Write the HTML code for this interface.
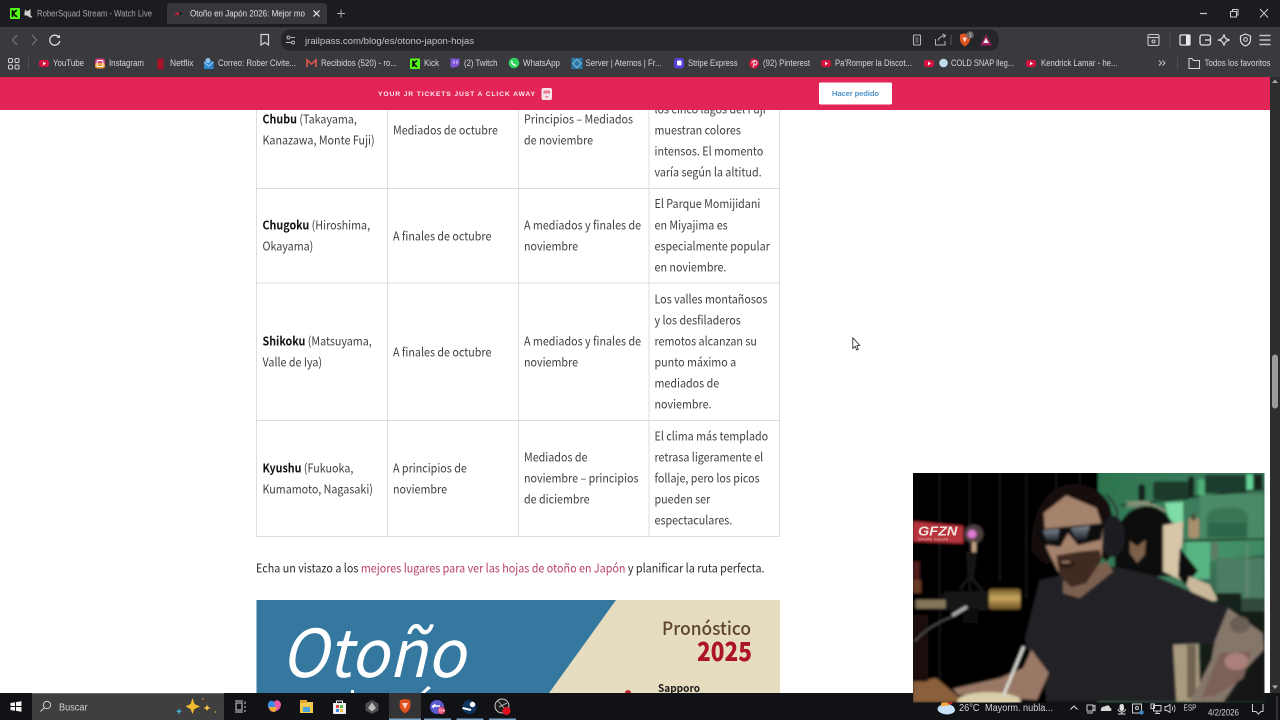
<!DOCTYPE html>
<html lang="es"><head><meta charset="utf-8"><title>Otoño en Japón</title>
<style>
html,body{margin:0;padding:0;width:1280px;height:720px;overflow:hidden;background:#fff}
svg{display:block;position:absolute;left:0;top:0}
.c{font-family:"Noto Sans CJK JP","Liberation Sans",sans-serif;font-size:12.2px;fill:#414141}
.b{font-weight:700;fill:#111}
.u{font-family:"Liberation Sans",sans-serif;font-size:8.8px;fill:#d8d8d8}
.t{font-family:"Liberation Sans",sans-serif;font-size:9px;fill:#e2e2e2}
.ic{fill:none;stroke:#c8c8c8;stroke-width:1.1}
</style></head><body>
<svg width="1280" height="720" viewBox="0 0 1280 720" xmlns="http://www.w3.org/2000/svg">
<defs>
<filter id="bl" x="-5%" y="-5%" width="110%" height="110%"><feGaussianBlur stdDeviation="4"/></filter>
<linearGradient id="gold" x1="0" y1="0" x2="0" y2="1"><stop offset="0" stop-color="#6e5526"/><stop offset=".45" stop-color="#c9a860"/><stop offset="1" stop-color="#6a5024"/></linearGradient>
<linearGradient id="wall" x1="0" y1="0" x2="1" y2="1"><stop offset="0" stop-color="#2b744e"/><stop offset=".45" stop-color="#3f7f5e"/><stop offset="1" stop-color="#1e3129"/></linearGradient>
<linearGradient id="lens" x1="0" y1="0" x2="0" y2="1"><stop offset="0" stop-color="#7d8792"/><stop offset="1" stop-color="#23252a"/></linearGradient>
</defs>

<!-- page -->
<rect width="1280" height="720" fill="#fff"/>
<g stroke="#dedede" stroke-width="1" fill="none">
<path d="M256.500 100V536.500H779.500V100M387.500 100V536.500M518.500 100V536.500M649 100V536.500M256.500 188.500H779.500M256.500 283H779.500M256.500 420.500H779.500"/>
</g>
<g transform="translate(262.500,.7) scale(.88,1)">
<text class="c" x="0" y="123"><tspan class="b">Chubu</tspan> (Takayama,</text>
<text class="c" x="0" y="144">Kanazawa, Monte Fuji)</text>
<text class="c" x="0" y="229"><tspan class="b">Chugoku</tspan> (Hiroshima,</text>
<text class="c" x="0" y="250">Okayama)</text>
<text class="c" x="0" y="345"><tspan class="b">Shikoku</tspan> (Matsuyama,</text>
<text class="c" x="0" y="366">Valle de Iya)</text>
<text class="c" x="0" y="472"><tspan class="b">Kyushu</tspan> (Fukuoka,</text>
<text class="c" x="0" y="493">Kumamoto, Nagasaki)</text>
</g>
<g transform="translate(393,.7) scale(.88,1)">
<text class="c" x="0" y="134">Mediados de octubre</text>
<text class="c" x="0" y="240">A finales de octubre</text>
<text class="c" x="0" y="356">A finales de octubre</text>
<text class="c" x="0" y="472">A principios de</text>
<text class="c" x="0" y="493">noviembre</text>
</g>
<g transform="translate(524,.7) scale(.88,1)">
<text class="c" x="0" y="123">Principios – Mediados</text>
<text class="c" x="0" y="144">de noviembre</text>
<text class="c" x="0" y="229">A mediados y finales de</text>
<text class="c" x="0" y="250">noviembre</text>
<text class="c" x="0" y="345">A mediados y finales de</text>
<text class="c" x="0" y="366">noviembre</text>
<text class="c" x="0" y="461">Mediados de</text>
<text class="c" x="0" y="482">noviembre – principios</text>
<text class="c" x="0" y="503">de diciembre</text>
</g>
<g transform="translate(654.500,.7) scale(.88,1)">
<text class="c" x="0" y="113">los cinco lagos del Fuji</text>
<text class="c" x="0" y="134">muestran colores</text>
<text class="c" x="0" y="155">intensos. El momento</text>
<text class="c" x="0" y="176">varía según la altitud.</text>
<text class="c" x="0" y="207.500">El Parque Momijidani</text>
<text class="c" x="0" y="229">en Miyajima es</text>
<text class="c" x="0" y="250">especialmente popular</text>
<text class="c" x="0" y="271">en noviembre.</text>
<text class="c" x="0" y="303">Los valles montañosos</text>
<text class="c" x="0" y="324">y los desfiladeros</text>
<text class="c" x="0" y="345">remotos alcanzan su</text>
<text class="c" x="0" y="366">punto máximo a</text>
<text class="c" x="0" y="387">mediados de</text>
<text class="c" x="0" y="408">noviembre.</text>
<text class="c" x="0" y="440">El clima más templado</text>
<text class="c" x="0" y="461">retrasa ligeramente el</text>
<text class="c" x="0" y="482">follaje, pero los picos</text>
<text class="c" x="0" y="503">pueden ser</text>
<text class="c" x="0" y="524">espectaculares.</text>
</g>
<g transform="translate(256,.7) scale(.882,1)">
<text class="c" x="0" y="572" style="fill:#2c2c2c">Echa un vistazo a los <tspan style="fill:#b8406e">mejores lugares para ver las hojas de otoño en Japón</tspan> y planificar la ruta perfecta.</text>
</g>

<!-- article image -->
<rect x="256.500" y="600" width="523.500" height="100" fill="#e6dcc0"/>
<polygon points="256.500,600 616,600 544,700 256.500,700" fill="#34779f"/>
<text x="281" y="677" font-family="'Noto Sans CJK JP','Liberation Sans',sans-serif" font-weight="400" font-style="italic" font-size="66" fill="#fff" textLength="184" lengthAdjust="spacingAndGlyphs">Otoño</text>
<polygon points="421,693 428,686 431,688 425,693" fill="#fff"/>
<rect x="351" y="690" width="3" height="4" fill="#fff"/>
<text x="662" y="635" font-family="'Noto Sans CJK JP',sans-serif" font-weight="500" font-size="18" fill="#5d4330" textLength="89" lengthAdjust="spacingAndGlyphs">Pronóstico</text>
<text x="697" y="661" font-family="'Noto Sans CJK JP',sans-serif" font-weight="900" font-size="26" fill="#ad1527" textLength="55" lengthAdjust="spacingAndGlyphs">2025</text>
<text x="658" y="692" font-family="'Noto Sans CJK JP',sans-serif" font-weight="700" font-size="10.500" fill="#1a1a1a" textLength="42" lengthAdjust="spacingAndGlyphs">Sapporo</text>
<circle cx="628" cy="693" r="3" fill="#c0242c"/>

<!-- banner -->
<rect x="0" y="77" width="1270" height="33" fill="#e32457"/>
<text x="378" y="96" font-family="'Liberation Sans',sans-serif" font-weight="700" font-size="6.800" fill="#fbe9ee" textLength="157">YOUR JR TICKETS JUST A CLICK AWAY</text>
<rect x="541.500" y="88" width="10.500" height="12" rx="2" fill="#f7e4e8"/>
<rect x="543.500" y="90.500" width="6.500" height="3" fill="#e8778f"/>
<rect x="545.500" y="96" width="2.500" height="1.500" fill="#e8778f"/>
<rect x="819" y="82.500" width="73" height="22" rx="1.500" fill="#fff"/>
<text x="832" y="96" font-family="'Liberation Sans',sans-serif" font-weight="700" font-size="7.600" fill="#4e93c9" textLength="47">Hacer pedido</text>

<!-- scrollbar -->
<rect x="1270" y="77" width="10" height="616" fill="#2d2d2d"/>
<polygon points="1275,79.500 1278,83 1272,83" fill="#aaa"/>
<polygon points="1275,689 1278,685.500 1272,685.500" fill="#aaa"/>
<rect x="1272" y="354.500" width="6" height="54" rx="3" fill="#9b9b9b"/>

<!-- cursor -->
<path d="M852.800 337.800V348.500L855.200 346.300L856.700 350L858.300 349.300L856.800 345.700L859.800 345.500Z" fill="#fff" stroke="#222" stroke-width=".8"/>

<!-- chrome -->
<rect width="1280" height="27" fill="#1c1c20"/>
<rect y="27" width="1280" height="50" fill="#3a3a3e"/>
<path d="M167 24V7Q167 3 171 3H323Q327 3 327 7V24Z" fill="#37373b"/>
<!-- tab 1 -->
<rect x="10" y="8" width="10" height="11" rx="1" fill="#53fc18"/>
<path d="M12.500 10V17M12.800 13.500L16.800 10M13 13.500L17 17" stroke="#0b0b0b" stroke-width="1.700" fill="none"/>
<g stroke="#cfcfcf" fill="none" stroke-width="1"><path d="M25 12H27L30 10V17L27 15H25Z" fill="#cfcfcf"/><path d="M25 10L32 17.500"/></g>
<text class="t" x="37" y="16.500" textLength="115" lengthAdjust="spacingAndGlyphs" style="fill:#a8a8a8">RoberSquad Stream - Watch Live</text>
<!-- tab 2 -->
<path d="M174 15L178 12H183L180 15Z" fill="#c4213f"/>
<rect x="179" y="12" width="3" height="3" fill="#222"/>
<text class="t" x="190" y="16.500" textLength="115" lengthAdjust="spacingAndGlyphs">Otoño en Japón 2026: Mejor mo</text>
<path d="M313.500 10.500L319.500 16.500M319.500 10.500L313.500 16.500" stroke="#eee" stroke-width="1.200"/>
<path d="M341 9.500V17.500M337 13.500H345" stroke="#aaa" stroke-width="1"/>
<!-- window ctl -->
<path d="M1200 13.500H1207" stroke="#ccc" stroke-width="1.200"/>
<path d="M1230.500 11.500H1236.500V17H1230.500ZM1232.500 11.500V9.500H1238V15H1236.500" stroke="#ccc" fill="none"/>
<path d="M1260 9L1268 17.500M1268 9L1260 17.500" stroke="#ccc" stroke-width="1"/>
<!-- nav -->
<path d="M17 35L12.500 40L17 45" stroke="#77777c" fill="none" stroke-width="1.100"/>
<path d="M32 35L36.500 40L32 45" stroke="#77777c" fill="none" stroke-width="1.100"/>
<path d="M59 37.500A5 5 0 1 0 59.700 41" stroke="#ddd" fill="none" stroke-width="1.300"/><path d="M56.500 37.800L60 38V34.800Z" fill="#ddd"/>
<path d="M261 34.500H268.500V45L264.800 42.500L261 45Z" stroke="#d4d4d4" fill="none" stroke-width="1.200"/>
<!-- address -->
<rect x="281" y="29.500" width="718" height="21" rx="9" fill="#26262a"/>
<g stroke="#bdbdbd" fill="none" stroke-width=".9"><circle cx="288.500" cy="37.500" r="1.500"/><circle cx="293" cy="42.500" r="1.500"/><path d="M291 37.500H295M286 42.500H291"/></g>
<text x="305" y="44" font-family="'Liberation Sans',sans-serif" font-size="9.400" fill="#c4c4c4" textLength="169" lengthAdjust="spacingAndGlyphs">jrailpass.com/blog/es/otono-japon-hojas</text>
<rect x="913.500" y="35" width="7" height="10" rx="1" fill="none" stroke="#b5b5b5" stroke-width="1.100"/><path d="M915.500 38H918.500M915.500 40H918.500M915.500 42H918.500" stroke="#b5b5b5" stroke-width=".7"/>
<path d="M935.500 39V45H945V41M938 40.500C939 37.500 941 36 945.500 35.500M942.500 34L945.500 35.500L943.500 38" stroke="#b5b5b5" fill="none" stroke-width="1"/>
<path d="M951 35V45" stroke="#555" stroke-width="1"/>
<path d="M960 34.500L964.500 33.500L969.500 34.500L970 40C969.500 43 966.500 45.500 964.800 46.500C963 45.500 960.500 43 960 40Z" fill="#e2521f"/>
<path d="M962.500 37.500L967 37.500L965.800 40.500L964.800 42L963.600 40.500Z" fill="#f6d4c6"/>
<circle cx="970" cy="35" r="3.800" fill="#666"/><text x="968.700" y="37.200" font-size="5.500" font-family="'Liberation Sans',sans-serif" fill="#ddd">1</text>
<polygon points="986,34.500 992,45.500 980,45.500" fill="#9b1f5a"/><polygon points="986,38 988.800,43 983.200,43" fill="#eee"/>
<!-- right tools -->
<g class="ic" stroke-width="1.200">
<rect x="1148" y="34.500" width="11" height="11" rx="1.500"/><path d="M1148 37.500H1159"/><circle cx="1153.500" cy="41.500" r="1.500"/>
</g>
<path d="M1170 33V47" stroke="#555"/>
<rect x="1180" y="35" width="10" height="10" rx="1" fill="none" stroke="#e8e8e8" stroke-width="1.200"/><rect x="1186" y="35" width="4" height="10" fill="#e8e8e8"/>
<rect x="1200" y="35" width="10.500" height="10" rx="2" fill="none" stroke="#ddd" stroke-width="1.300"/><path d="M1205 40H1210.500" stroke="#ddd" stroke-width="1.300"/>
<path d="M1224 34.500C1224.800 38 1225.500 39 1229.500 40C1226 40.800 1224.800 42 1224 45.500C1223 42 1222 40.800 1219 40C1222 39 1223 38 1224 34.500Z" fill="none" stroke="#ddd" stroke-width="1.200"/>
<path d="M1245.500 34L1250.500 36V40C1250.500 43 1248 45 1245.500 46C1243 45 1240.500 43 1240.500 40V36Z" fill="none" stroke="#ddd" stroke-width="1.200"/><circle cx="1245.500" cy="39.500" r="1.900" class="ic"/>
<path d="M1259.500 35.500H1270.500M1259.500 40H1270.500M1259.500 44.500H1270.500" stroke="#c4c4c4" stroke-width="1.400"/>

<!-- bookmarks -->
<g fill="none" stroke="#d5d5d5" stroke-width="1"><rect x="8.500" y="58.500" width="4" height="4" rx="1.300"/><rect x="15" y="58.500" width="4" height="4" rx="1.300"/><rect x="8.500" y="65" width="4" height="4" rx="1.300"/><rect x="15" y="65" width="4" height="4" rx="1.300"/></g>
<path d="M28.500 56V70" stroke="#4d4d4d"/>
<g id="yt"><rect x="39" y="60" width="10" height="7" rx="2.500" fill="#d6123f"/><polygon points="43,61.800 46,63.500 43,65.200" fill="#fff"/></g>
<text class="u" x="53" y="66" textLength="31" lengthAdjust="spacingAndGlyphs">YouTube</text>
<rect x="95" y="58.500" width="10" height="10" rx="2.500" fill="#d1417f"/><rect x="95" y="63" width="10" height="5.500" rx="2.500" fill="#f3a13a"/><rect x="97" y="60.500" width="6" height="6" rx="1.500" fill="none" stroke="#fff" stroke-width=".9"/>
<text class="u" x="109" y="66" textLength="35" lengthAdjust="spacingAndGlyphs">Instagram</text>
<rect x="157.500" y="58.500" width="6" height="11" fill="#a8122a"/>
<text class="u" x="170" y="66" textLength="23.500" lengthAdjust="spacingAndGlyphs">Netflix</text>
<rect x="204" y="61" width="9.500" height="8" rx="1" fill="#2b87cf"/><circle cx="208" cy="60.500" r="2.500" fill="#8fc3e8"/><path d="M204 62L208.500 66L213.500 62" stroke="#cfe6f7" fill="none" stroke-width=".7"/>
<text class="u" x="218" y="66" textLength="78" lengthAdjust="spacingAndGlyphs">Correo: Rober Civite...</text>
<path d="M307 67V60L311.500 64L316 60V67" fill="none" stroke="#d9574a" stroke-width="1.700"/>
<text class="u" x="321" y="66" textLength="76" lengthAdjust="spacingAndGlyphs">Recibidos (520) - ro...</text>
<rect x="410" y="58.500" width="10" height="10.500" rx="1" fill="#53fc18"/><path d="M413 60.500V67M413.200 63.700L417 60.500M413.300 63.700L417 67" stroke="#0b0b0b" stroke-width="1.600" fill="none"/>
<text class="u" x="424" y="66" textLength="15" lengthAdjust="spacingAndGlyphs">Kick</text>
<path d="M450.500 58.500H459.500V64.500L456.500 67H454L452.500 69V67H450.500Z" fill="#8056d8"/><path d="M454 60.800V63.800M457 60.800V63.800" stroke="#fff" stroke-width=".8"/>
<text class="u" x="464" y="66" textLength="33.500" lengthAdjust="spacingAndGlyphs">(2) Twitch</text>
<circle cx="514" cy="63" r="5.300" fill="#2fd15e"/><path d="M511.800 60.800C511.500 63.500 513.500 65.500 516.300 65.400" stroke="#fff" fill="none" stroke-width="1.400"/>
<text class="u" x="523" y="66" textLength="37" lengthAdjust="spacingAndGlyphs">WhatsApp</text>
<rect x="571.500" y="58" width="11" height="11" fill="#2a78a8"/><rect x="574" y="60.500" width="6" height="6" fill="none" stroke="#9ccbe5" stroke-width=".8" transform="rotate(45 577 63.500)"/>
<text class="u" x="585.500" y="66" textLength="76" lengthAdjust="spacingAndGlyphs">Server | Aternos | Fr...</text>
<rect x="674" y="58" width="10" height="10.500" rx="2.500" fill="#5b3fd6"/><rect x="677" y="60.500" width="4.500" height="5" rx="1" fill="#fff"/>
<text class="u" x="688" y="66" textLength="49.500" lengthAdjust="spacingAndGlyphs">Stripe Express</text>
<circle cx="754" cy="63.500" r="5" fill="#d6123f"/><path d="M753 67.500L754.500 61M752 63.500C751 60.500 757 59.500 757 62.500C757 65 754.500 65.500 753.800 64.500" stroke="#fff" stroke-width=".9" fill="none"/>
<text class="u" x="763" y="66" textLength="47" lengthAdjust="spacingAndGlyphs">(92) Pinterest</text>
<use href="#yt" x="782"/>
<text class="u" x="835" y="66" textLength="77" lengthAdjust="spacingAndGlyphs">Pa'Romper la Discot...</text>
<use href="#yt" x="885"/>
<circle cx="943.500" cy="63" r="4.300" fill="#bfdcec"/>
<text class="u" x="951" y="66" textLength="63" lengthAdjust="spacingAndGlyphs">COLD SNAP lleg...</text>
<use href="#yt" x="987"/>
<text class="u" x="1041" y="66" textLength="76.500" lengthAdjust="spacingAndGlyphs">Kendrick Lamar - he...</text>
<path d="M1159 60.500L1161.500 63L1159 65.500M1162.500 60.500L1165 63L1162.500 65.500" stroke="#ccc" fill="none" stroke-width=".9"/>
<path d="M1177.500 56V70" stroke="#4d4d4d"/>
<path d="M1189 60.500V68.500H1199.500V60.500H1193.500L1192 58.500H1189Z" stroke="#d5d5d5" fill="none"/>
<text class="u" x="1204.500" y="66" textLength="66" lengthAdjust="spacingAndGlyphs">Todos los favoritos</text>

<!-- taskbar -->
<rect y="693" width="1280" height="27" fill="#101216"/>
<rect x="32" y="693" width="192" height="27" fill="#3f3f40"/>
<rect x="32" y="693" width="192" height="1" fill="#6c6c6c"/>
<g fill="#f2f2f2"><path d="M10.500 703L15 702.300V706H10.500ZM16 702.100L21.500 701.200V706H16ZM10.500 707H15V710.800L10.500 710.100ZM16 707H21.500V711.800L16 710.900Z"/></g>
<circle cx="47" cy="705" r="3.700" fill="none" stroke="#ddd" stroke-width=".9"/><path d="M44.300 707.800L40.500 711.500" stroke="#ddd" stroke-width=".9"/>
<text x="59" y="710.500" font-family="'Liberation Sans',sans-serif" font-size="10" fill="#cfcfcf" textLength="28.500" lengthAdjust="spacingAndGlyphs">Buscar</text>
<path d="M192.500 698L194.500 704L200 706.500L194.500 709L192.500 714L190.500 709L185.500 706.500L190.500 704Z" fill="#f4b92e"/>
<path d="M207 704.500L208 707L210.500 708L208 709L207 711L206 709L203.500 708L206 707Z" fill="#f4c843"/>
<path d="M179 708.500L180 710.500L182 711.300L180 712L179 714.500L178 712L176 711.300L178 710.500Z" fill="#3fb6dc"/>
<circle cx="203" cy="699" r=".9" fill="#dd7a3a"/><circle cx="215.500" cy="712" r=".9" fill="#9ab83a"/>
<g stroke="#cfcfcf" fill="none" stroke-width="1"><rect x="236" y="703" width="6" height="7"/><path d="M235 701H243M235 712H243M245 701.500V704M245 706V708M245 710V712"/></g>
<path d="M268 704C269 700 273 700 274 702L277 708C278 711 275 712 273 711C270 710 267 708 268 704Z" fill="#3d8be8"/><path d="M274 702C276 699 280 700 281 704C281 708 278 711 276 711Z" fill="#e85aa8"/><path d="M269 707C269 711 272 712 275 712L277 707Z" fill="#f3a93a"/>
<rect x="300" y="702" width="13" height="11" fill="#f2c94c"/><rect x="300" y="700" width="7" height="3" fill="#e0a92e"/><rect x="303" y="707" width="7" height="5" fill="#4aa3dc"/>
<path d="M333 703H346V713Q346 714 345 714H334Q333 714 333 713Z" fill="#eee"/><path d="M336.500 703V701H342.500V703" stroke="#eee" fill="none"/><rect x="336" y="705" width="3" height="3" fill="#e24d3a"/><rect x="340" y="705" width="3" height="3" fill="#5aba4a"/><rect x="336" y="709" width="3" height="3" fill="#3a8ae2"/><rect x="340" y="709" width="3" height="3" fill="#f2c33a"/>
<polygon points="372,700 378.500,703.500 378.500,710.500 372,714 365.500,710.500 365.500,703.500" fill="#4c4c50"/><path d="M372 702.500L376 708L372 711.500L368 708Z" fill="#bdbdbd"/>
<rect x="389" y="693" width="32" height="27" fill="#343434"/>
<path d="M400 700L405 699L410 700L410.500 706C410 710 406.500 712.500 405 713.500C403.500 712.500 400 710 399.500 706Z" fill="#e2521f"/><path d="M402 703L408 703L406 707L405 709L404 707Z" fill="#f6d4c6"/>
<circle cx="437" cy="707" r="7" fill="#5a5ad0"/><path d="M432 706H440M435 704L433 708" stroke="#fff" stroke-width="1.500"/><circle cx="441.500" cy="710.500" r="3.800" fill="#e2456e"/><text x="438.800" y="712.500" font-size="5.500" font-family="'Liberation Sans',sans-serif" fill="#fff">9+</text>
<circle cx="469.500" cy="707" r="7" fill="#10355c"/><path d="M462.500 708L471 710" stroke="#fff" stroke-width="2"/><circle cx="472.500" cy="704.500" r="2.700" fill="#fff"/>
<circle cx="502" cy="706" r="7" fill="#1f1f1f" stroke="#ccc" stroke-width="1"/><path d="M498 701L504 708M507 703L499 707" stroke="#ccc" stroke-width=".7"/><circle cx="506.500" cy="711" r="4" fill="#e01020"/>
<rect x="389" y="718.500" width="32" height="1.500" fill="#7da7c9"/><rect x="424" y="718.500" width="27" height="1.500" fill="#7da7c9"/><rect x="456.500" y="718.500" width="27" height="1.500" fill="#7da7c9"/><rect x="489" y="718.500" width="27" height="1.500" fill="#7da7c9"/>

<!-- tray -->
<ellipse cx="946" cy="709" rx="8.500" ry="5" fill="#b9d8f2"/><circle cx="945" cy="705" r="4" fill="#f2a93a"/><ellipse cx="947" cy="710" rx="8" ry="4.500" fill="#c9e2f7"/><circle cx="950" cy="702" r="2.500" fill="#d8232a"/>
<text x="959" y="711" font-family="'Liberation Sans',sans-serif" font-size="10" fill="#d5d5d5" textLength="20.500" lengthAdjust="spacingAndGlyphs">26°C</text>
<text x="985" y="711" font-family="'Liberation Sans',sans-serif" font-size="10" fill="#d5d5d5" textLength="68" lengthAdjust="spacingAndGlyphs">Mayorm. nubla...</text>
<path d="M1070.500 709.500L1074 706L1077.500 709.500" stroke="#ddd" fill="none"/>
<g stroke="#cfcfcf" fill="none" stroke-width="1"><rect x="1087" y="705" width="6" height="6"/><path d="M1093 706.500L1095 705.500V710.500L1093 709.500M1087 713H1093"/></g>
<path d="M1101 711C1100 708 1103 706 1105 706.500C1107 704.500 1110 705.500 1110 708C1112 708 1112 711 1110 711Z" fill="#d5d5d5"/>
<rect x="1119.500" y="704" width="4.500" height="7" rx="2.200" fill="#ddd"/><path d="M1118 709C1118 713 1125.500 713 1125.500 709M1121.800 712V714H1118H1125.500" stroke="#ddd" fill="none"/>
<g stroke="#cfcfcf" fill="none"><rect x="1132.500" y="704" width="9" height="9"/><circle cx="1137" cy="708" r="1.500"/></g><circle cx="1141.500" cy="712.500" r="2.200" fill="#3a8ad0"/>
<g stroke="#cfcfcf" fill="none"><rect x="1151" y="704" width="3.500" height="4.500"/><rect x="1153.500" y="705.500" width="7.500" height="5.500"/><path d="M1155 713.500H1160M1157 711V713.500"/></g>
<path d="M1165 706.500H1167L1170 704.500V712.500L1167 710.500H1165Z" stroke="#cfcfcf" fill="none"/><path d="M1172 706.500C1173 708 1173 709 1172 710.500M1174 705C1175.500 707.500 1175.500 709.500 1174 712" stroke="#cfcfcf" fill="none" stroke-width=".8"/>
<text x="1183.500" y="710.500" font-family="'Liberation Sans',sans-serif" font-size="8.500" fill="#d5d5d5" textLength="13" lengthAdjust="spacingAndGlyphs">ESP</text>
<text x="1208" y="715.500" font-family="'Liberation Sans',sans-serif" font-size="9" fill="#d5d5d5" textLength="31" lengthAdjust="spacingAndGlyphs">4/2/2026</text>
<path d="M1252.500 704V711.500H1256L1258.500 714L1261 711.500H1263V704" stroke="#cfcfcf" fill="none"/>
<path d="M1277 696V720" stroke="#555"/>

<!-- webcam -->
<svg x="913" y="473" width="351.500" height="229.500" viewBox="40 25 1054 688" preserveAspectRatio="none">
<g filter="url(#bl)">
<rect x="30" y="15" width="1080" height="710" fill="#060505"/>
<g stroke="#0d0b0b" stroke-width="10"><path d="M120 20V700M210 20V400M300 20V350M380 20V400M470 20V80M540 20V80"/></g>
<rect x="595" y="15" width="510" height="710" fill="url(#wall)"/>
<rect x="1040" y="30" width="20" height="50" fill="#66d394"/>
<rect x="895" y="45" width="20" height="50" fill="#4fb27a"/>
<rect x="760" y="50" width="110" height="55" rx="8" fill="#1d3a2c"/>
<rect x="865" y="35" width="18" height="65" rx="6" fill="#12251c"/>
<rect x="915" y="30" width="125" height="55" rx="6" fill="#1f3d2e"/>
<rect x="1060" y="28" width="28" height="45" fill="#12251c"/>
<rect x="716" y="58" width="20" height="55" rx="8" fill="#14241c"/>
<polygon points="795,115 850,112 850,180 810,170" fill="#7fdca4"/>
<path d="M660 122L1093 73" stroke="#152a20" stroke-width="5"/>
<rect x="680" y="108" width="70" height="22" fill="#6d8a6e"/>
<rect x="900" y="90" width="193" height="130" fill="#4c8a68"/>
<path d="M920 220V165Q920 128 985 128Q1045 128 1045 160V220Z" fill="#3a7555"/>
<path d="M925 215V175H1040V215Z" fill="#2a6647"/>
<rect x="866" y="160" width="32" height="60" rx="6" fill="#a8906e"/><rect x="875" y="147" width="12" height="20" fill="#4a4a3a"/>
<polygon points="840,230 1093,218 1093,270 840,300" fill="#4eae79" opacity=".5"/>
<path d="M840 229L1093 223" stroke="#15291f" stroke-width="5"/>
<rect x="935" y="232" width="20" height="52" fill="#5e7a64"/>
<rect x="860" y="232" width="70" height="110" fill="#58b583"/>
<rect x="950" y="280" width="143" height="120" fill="#4c7d62"/>
<rect x="1040" y="240" width="5" height="200" fill="#6c8c78"/>
<rect x="950" y="385" width="75" height="70" fill="#16211c"/>
<rect x="1025" y="400" width="70" height="60" fill="#33483d"/>
<rect x="1020" y="440" width="75" height="270" fill="#121a16"/>
<rect x="900" y="450" width="130" height="262" fill="#151b18"/>
<ellipse cx="740" cy="232" rx="92" ry="108" fill="#0c0c0d"/>
<rect x="645" y="190" width="170" height="145" fill="#0c0c0d"/>
<path d="M690 118Q740 105 800 140" stroke="#a89a86" stroke-width="4" fill="none"/>
<polygon points="790,182 850,170 848,230 835,300 852,350 790,320" fill="#d8c6a8"/>
<polygon points="840,250 895,318 858,362 835,335" fill="#111"/>
<polygon points="868,335 930,360 953,405 900,420 860,360" fill="#c9b89b"/>
<polygon points="690,228 712,245 738,225 735,270 712,295 690,265" fill="#7c6048"/>
<polygon points="810,530 895,530 900,660 880,710 820,710" fill="#a9997f"/>
<rect x="862" y="540" width="26" height="160" fill="#6f6450"/>
<!-- shirt -->
<polygon points="375,525 420,345 640,305 770,335 985,430 945,535 820,540 830,712 440,712 430,620 385,555" fill="#242427"/>
<!-- left arm & table -->
<polygon points="40,650 110,640 195,712 40,712" fill="#8a5e3a"/>
<rect x="40" y="450" width="45" height="200" fill="#1d0f0a"/>
<polygon points="395,555 447,625 412,705 175,690 160,672 300,640 370,610" fill="#9a7866"/>
<ellipse cx="268" cy="708" rx="95" ry="26" fill="#d8cfa8"/>
<path d="M372 545L312 690" stroke="#e2e2dc" stroke-width="8"/>
<!-- tattoo arm -->
<polygon points="985,430 1088,505 1092,555 1040,610 970,712 870,712 935,585 945,530" fill="#85766a"/>
<polygon points="960,565 1055,560 1030,640 950,690 905,700" fill="#7c605a"/>
<ellipse cx="1010" cy="590" rx="36" ry="26" fill="#ab7f7a"/>
<ellipse cx="1020" cy="480" rx="30" ry="25" fill="#6a5f55"/>
<polygon points="1060,600 1095,550 1095,712 985,712" fill="#141414"/>
<!-- neck -->
<polygon points="490,350 620,290 640,320 540,400 490,385" fill="#7c6050"/>
<!-- hair / headphones -->
<path d="M395 260Q395 90 500 60Q590 50 630 120L660 250L620 290L560 240L440 300Z" fill="#15100e"/>
<ellipse cx="640" cy="215" rx="35" ry="62" fill="#1d1d20"/>
<path d="M620 90Q660 130 650 160" stroke="#2b2b2e" stroke-width="6" fill="none"/>
<!-- face -->
<polygon points="432,145 500,92 590,130 610,190 606,275 565,350 515,365 475,320 440,250" fill="#a5826c"/>
<polygon points="470,272 530,262 600,255 606,285 560,355 515,368 480,335" fill="#3f2c20"/>
<ellipse cx="498" cy="296" rx="24" ry="13" fill="#23130f"/>
<ellipse cx="498" cy="292" rx="16" ry="5" fill="#8a6654"/>
<!-- glasses -->
<polygon points="405,195 612,175 604,225 535,242 505,205 482,247 432,240" fill="#0d0c0e"/>
<polygon points="430,197 478,193 474,228 440,228" fill="url(#lens)"/>
<polygon points="512,190 570,183 558,225 530,225" fill="url(#lens)"/>
<!-- mic -->
<polygon points="40,170 190,184 190,236 40,230" fill="#b8343c"/>
<circle cx="222" cy="208" r="28" fill="#4e4140"/>
<circle cx="217" cy="208" r="13" fill="#e27bd6"/>
<rect x="217" y="232" width="12" height="36" fill="#c8a888"/>
<polygon points="200,262 232,262 222,345 205,350" fill="#161616"/>
<path d="M205 340L180 375M215 340L250 380" stroke="#1b1b1b" stroke-width="6"/>
<rect x="132" y="380" width="140" height="56" rx="10" fill="#151515"/>
<rect x="190" y="430" width="45" height="45" fill="#0e0e0e"/>
<rect x="268" y="372" width="94" height="62" rx="8" fill="url(#gold)"/>
<rect x="48" y="405" width="90" height="26" fill="#85765a"/>
<path d="M158 452L202 426" stroke="#b9b9b9" stroke-width="9"/>
<path d="M44 530Q90 480 160 455" stroke="#6a6a6a" stroke-width="3" fill="none"/>
<rect x="40" y="290" width="20" height="90" fill="#4f1d1b"/>
<rect x="40" y="345" width="24" height="40" fill="#6a3a26"/>
</g>
<text x="55" y="212" font-family="'Liberation Sans',sans-serif" font-weight="700" font-style="italic" font-size="38" fill="#f0e4e0" textLength="118" lengthAdjust="spacingAndGlyphs">GFZN</text>
<text x="56" y="228" font-family="'Liberation Sans',sans-serif" font-size="10" fill="#e8c8c4" textLength="90">SHURE SQUAD</text>
</svg>
</svg>
</body></html>
